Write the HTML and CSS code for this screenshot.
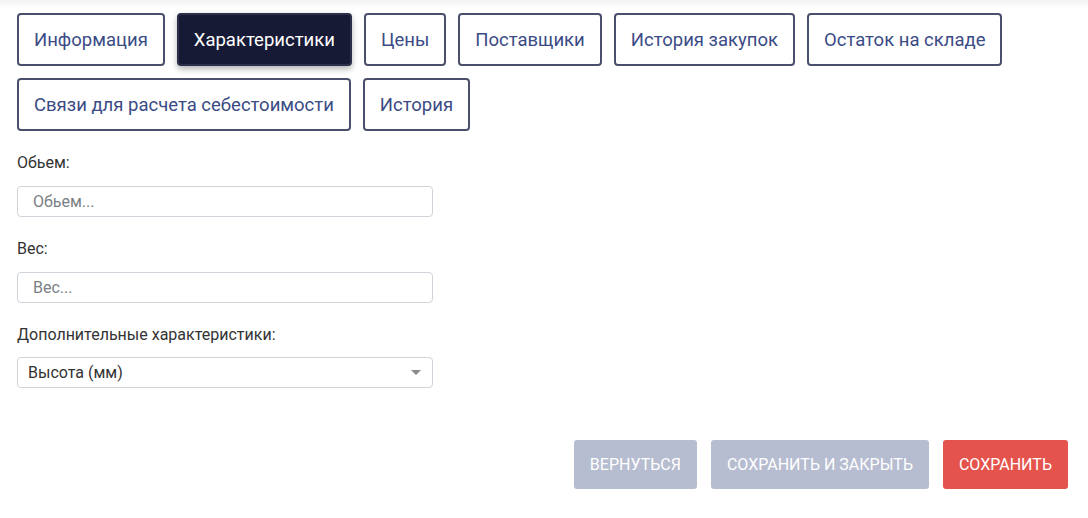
FILE: index.html
```html
<!DOCTYPE html>
<html lang="ru">
  <head>
    <meta charset="UTF-8" />
    <meta name="viewport" content="width=device-width, initial-scale=1.0" />
    <title>Товар</title>
    <link rel="stylesheet" href="styles.css">
  </head>

  <body>
    <div class="top-shadow"></div>
    <div class="page">
      <div class="tabs">
        <button class="tab">Информация</button>
        <button class="tab active">Характеристики</button>
        <button class="tab">Цены</button>
        <button class="tab">Поставщики</button>
        <button class="tab">История закупок</button>
        <button class="tab">Остаток на складе</button>
        <button class="tab">Связи для расчета себестоимости</button>
        <button class="tab">История</button>
      </div>

      <div class="form">
        <div class="field">
          <label for="volume">Обьем:</label>
          <input id="volume" class="input" type="text" placeholder="Обьем..." />
        </div>
        <div class="field">
          <label for="weight">Вес:</label>
          <input id="weight" class="input" type="text" placeholder="Вес..." />
        </div>
        <div class="field">
          <label for="extra">Дополнительные характеристики:</label>
          <div class="select">
            <span>Высота (мм)</span>
            <span class="arrow"></span>
          </div>
        </div>
      </div>

      <div class="actions">
        <button class="btn btn-gray">Вернуться</button>
        <button class="btn btn-gray">Сохранить и закрыть</button>
        <button class="btn btn-red">Сохранить</button>
      </div>
    </div>
  </body>
</html>
```

FILE: styles.css
```css
body {
  margin: 0;
  background-color: #fff;
  font-family: Roboto, "Liberation Sans", sans-serif;
  color: #333;
}

.top-shadow {
  height: 8px;
  background: linear-gradient(to bottom, #f1f2f3, #fff);
}

.page {
  padding: 5px 20px 0 17px;
}

.tabs {
  display: flex;
  flex-wrap: wrap;
  gap: 12px 12px;
}

.tab {
  box-sizing: border-box;
  height: 53px;
  padding: 0 15px;
  background-color: #fff;
  border: 2px solid #4b4f6e;
  border-radius: 4px;
  color: #3b4b85;
  font-family: Roboto, "Liberation Sans", sans-serif;
  font-size: 18.5px;
  cursor: pointer;
}

.tab.active {
  background-color: #171a35;
  border-color: #2c2f4a;
  color: #fff;
  box-shadow: 0 3px 6px rgba(0, 0, 0, 0.3);
}

.form {
  width: 416px;
  padding-top: 22px;
}

.field {
  display: flex;
  flex-direction: column;
  margin-bottom: 22px;
}

.field:last-child {
  margin-bottom: 0;
}

.field label {
  font-size: 16px;
  line-height: 19px;
  margin-bottom: 14px;
}

.field:last-child label {
  margin-bottom: 13px;
}

.input,
.select {
  box-sizing: border-box;
  height: 31px;
  width: 416px;
  border: 1px solid #ced4da;
  border-radius: 4px;
  font-family: Roboto, "Liberation Sans", sans-serif;
  font-size: 16px;
}

.input {
  padding: 0 15px;
  color: #333;
}

.input::placeholder {
  color: #7b7f85;
}

.select {
  display: flex;
  align-items: center;
  justify-content: space-between;
  padding: 0 10px;
  color: #333;
}

.arrow {
  width: 0;
  height: 0;
  border-left: 5px solid transparent;
  border-right: 5px solid transparent;
  border-top: 5px solid #888;
  margin-right: 1px;
}

.actions {
  display: flex;
  justify-content: flex-end;
  gap: 14px;
  margin-top: 52px;
}

.btn {
  height: 49px;
  padding: 0 16px;
  border: none;
  border-radius: 3px;
  color: #fff;
  font-family: Roboto, "Liberation Sans", sans-serif;
  font-size: 16px;
  text-transform: uppercase;
  cursor: pointer;
}

.btn-gray {
  background-color: #b7bdd0;
}

.btn-red {
  background-color: #e5534d;
}
```
